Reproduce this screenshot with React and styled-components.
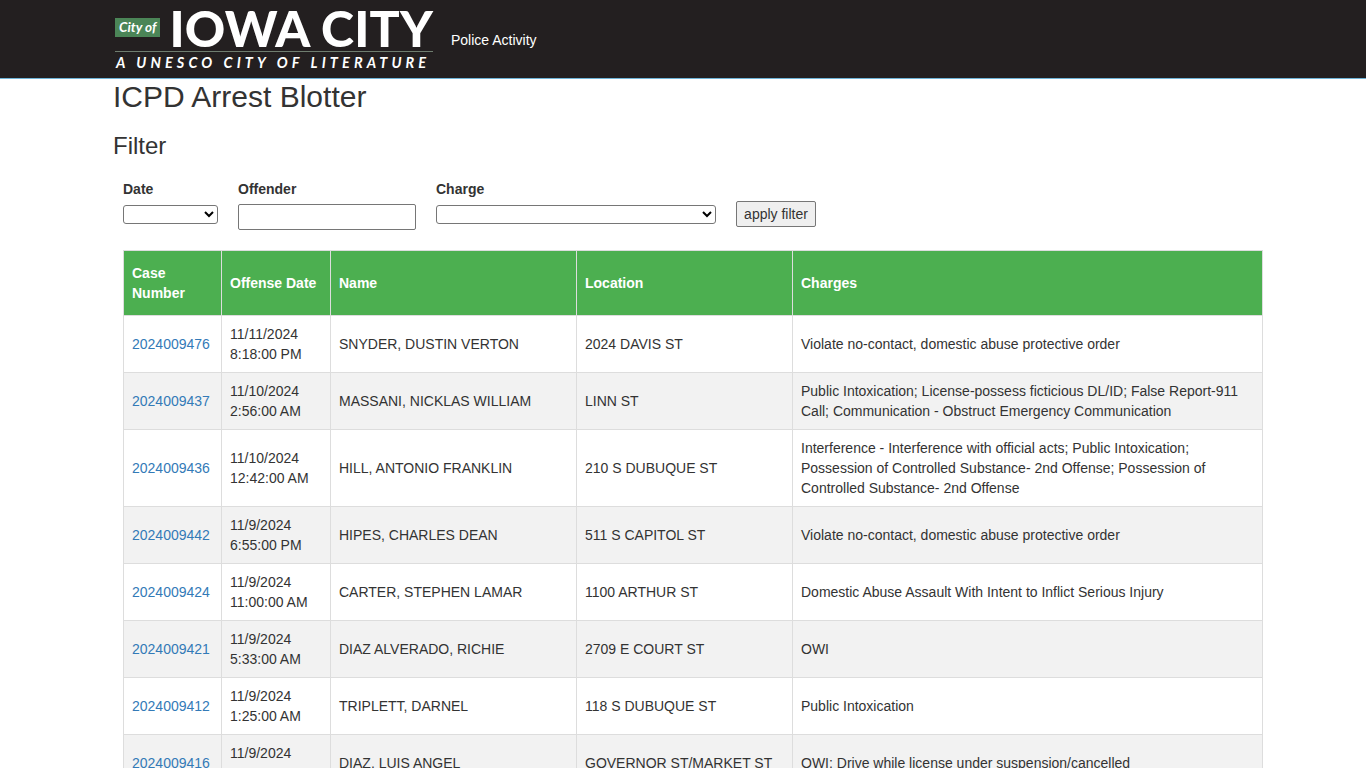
import React from 'react'
import styled, { createGlobalStyle } from 'styled-components'

const rows = [
  { id: '2024009476', date: '11/11/2024', time: '8:18:00 PM', name: 'SNYDER, DUSTIN VERTON', loc: '2024 DAVIS ST', charges: 'Violate no-contact, domestic abuse protective order' },
  { id: '2024009437', date: '11/10/2024', time: '2:56:00 AM', name: 'MASSANI, NICKLAS WILLIAM', loc: 'LINN ST', charges: 'Public Intoxication; License-possess ficticious DL/ID; False Report-911 Call; Communication - Obstruct Emergency Communication' },
  { id: '2024009436', date: '11/10/2024', time: '12:42:00 AM', name: 'HILL, ANTONIO FRANKLIN', loc: '210 S DUBUQUE ST', charges: 'Interference - Interference with official acts; Public Intoxication; Possession of Controlled Substance- 2nd Offense; Possession of Controlled Substance- 2nd Offense' },
  { id: '2024009442', date: '11/9/2024', time: '6:55:00 PM', name: 'HIPES, CHARLES DEAN', loc: '511 S CAPITOL ST', charges: 'Violate no-contact, domestic abuse protective order' },
  { id: '2024009424', date: '11/9/2024', time: '11:00:00 AM', name: 'CARTER, STEPHEN LAMAR', loc: '1100 ARTHUR ST', charges: 'Domestic Abuse Assault With Intent to Inflict Serious Injury' },
  { id: '2024009421', date: '11/9/2024', time: '5:33:00 AM', name: 'DIAZ ALVERADO, RICHIE', loc: '2709 E COURT ST', charges: 'OWI' },
  { id: '2024009412', date: '11/9/2024', time: '1:25:00 AM', name: 'TRIPLETT, DARNEL', loc: '118 S DUBUQUE ST', charges: 'Public Intoxication' },
  { id: '2024009416', date: '11/9/2024', time: '12:40:00 AM', name: 'DIAZ, LUIS ANGEL', loc: 'GOVERNOR ST/MARKET ST', charges: 'OWI; Drive while license under suspension/cancelled' },
]

const columns = [
  { label: 'Case Number', width: 98 },
  { label: 'Offense Date', width: 109 },
  { label: 'Name', width: 246 },
  { label: 'Location', width: 216 },
  { label: 'Charges', width: 470 },
]

function App() {
  return (
    <>
      <GlobalStyle />
      <Header>
        <Logo>
          <LogoTop>
            <CityOf>City of</CityOf>
            <LogoName>IOWA CITY</LogoName>
          </LogoTop>
          <Tagline>A UNESCO CITY OF LITERATURE</Tagline>
        </Logo>
        <NavLink href="#">Police Activity</NavLink>
      </Header>
      <Container>
        <Title>ICPD Arrest Blotter</Title>
        <SubTitle>Filter</SubTitle>
        <FilterForm>
          <Field>
            <Label>Date</Label>
            <Select $width={95} />
          </Field>
          <Field>
            <Label>Offender</Label>
            <TextInput type="text" />
          </Field>
          <Field>
            <Label>Charge</Label>
            <Select $width={280} />
          </Field>
          <ApplyButton type="button">apply filter</ApplyButton>
        </FilterForm>
        <Table>
          <colgroup>
            {columns.map(c => <Col key={c.label} $width={c.width} />)}
          </colgroup>
          <thead>
            <tr>
              {columns.map(c => <Th key={c.label}>{c.label}</Th>)}
            </tr>
          </thead>
          <tbody>
            {rows.map(r => (
              <Row key={r.id}>
                <Td><CaseLink href="#">{r.id}</CaseLink></Td>
                <Td>{r.date}<br />{r.time}</Td>
                <Td>{r.name}</Td>
                <Td>{r.loc}</Td>
                <Td>{r.charges}</Td>
              </Row>
            ))}
          </tbody>
        </Table>
      </Container>
    </>
  )
}

export default App

const GlobalStyle = createGlobalStyle`
  * {
    box-sizing: border-box;
  }
  html, body {
    height: 100vh;
    overflow: hidden;
  }
  body {
    margin: 0;
    background: #fff;
    color: #333;
    font-family: "Liberation Sans", Arial, sans-serif;
    font-size: 14px;
    line-height: 20px;
  }
`

const Header = styled.header`
  height: 79px;
  padding-left: 115px;
  display: flex;
  align-items: flex-start;
  background: #231f20;
  border-bottom: 1px solid #6fb4d8;
`
const Logo = styled.div`
  width: 318px;
  padding-top: 9px;
  display: flex;
  flex-direction: column;
`
const LogoTop = styled.div`
  height: 43px;
  display: flex;
  align-items: flex-start;
  border-bottom: 1px solid #6f7d6f;
`
const CityOf = styled.span`
  width: 46px;
  height: 19px;
  margin-top: 9px;
  background: #4b8557;
  color: #fff;
  font-family: Lato, sans-serif;
  font-size: 13.5px;
  font-weight: 700;
  font-style: italic;
  line-height: 19px;
  text-align: center;
  white-space: nowrap;
`
const LogoName = styled.span`
  margin-left: 9px;
  color: #fff;
  font-family: Lato, sans-serif;
  font-size: 50px;
  font-weight: 900;
  line-height: 38px;
  letter-spacing: 0.2px;
  white-space: nowrap;
`
const Tagline = styled.div`
  margin-top: 2px;
  padding-left: 1px;
  color: #fff;
  font-family: Lato, sans-serif;
  font-size: 14.5px;
  font-weight: 700;
  font-style: italic;
  line-height: 18px;
  letter-spacing: 4.1px;
  white-space: nowrap;
`
const NavLink = styled.a`
  margin: 30px 0 0 18px;
  color: #fff;
  text-decoration: none;
`
const Container = styled.main`
  padding: 1px 0 0 113px;
`
const Title = styled.h1`
  margin: 0;
  font-size: 30px;
  font-weight: 400;
  line-height: 33px;
`
const SubTitle = styled.h2`
  margin: 20px 0 20px;
  font-size: 24px;
  font-weight: 400;
  line-height: 26px;
`
const FilterForm = styled.form`
  margin-left: 10px;
  display: flex;
  align-items: flex-start;
  gap: 20px;
`
const Field = styled.div`
  display: flex;
  flex-direction: column;
  align-items: flex-start;
`
const Label = styled.label`
  margin-bottom: 5px;
  font-weight: 700;
`
const Select = styled.select`
  width: ${p => p.$width}px;
  height: 19px;
  margin-top: 1px;
  font-family: "Liberation Sans", Arial, sans-serif;
  font-size: 13px;
  background: #fff;
  border: 1px solid #767676;
  border-radius: 3px;
`
const TextInput = styled.input`
  width: 178px;
  height: 26px;
  padding: 1px 2px;
  font-family: "Liberation Sans", Arial, sans-serif;
  font-size: 14px;
  border: 1px solid #767676;
  border-radius: 2px;
  background: #fff;
`
const ApplyButton = styled.button`
  width: 80px;
  height: 26px;
  margin-top: 22px;
  padding: 0;
  font-family: "Liberation Sans", Arial, sans-serif;
  font-size: 14px;
  color: #333;
  background: #efefef;
  border: 1px solid #767676;
  border-radius: 2px;
`
const Table = styled.table`
  width: 1139px;
  margin: 20px 0 0 10px;
  table-layout: fixed;
  border-collapse: collapse;
`
const Col = styled.col`
  width: ${p => p.$width}px;
`
const Th = styled.th`
  padding: 12px 8px;
  background: #4caf50;
  color: #fff;
  font-weight: 700;
  text-align: left;
  border: 1px solid #ddd;
`
const Row = styled.tr`
  &:nth-child(even) {
    background: #f2f2f2;
  }
`
const Td = styled.td`
  padding: 8px;
  border: 1px solid #ddd;
`
const CaseLink = styled.a`
  color: #337ab7;
  text-decoration: none;
`
